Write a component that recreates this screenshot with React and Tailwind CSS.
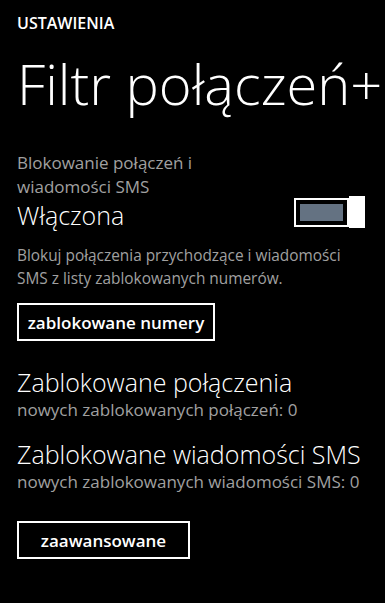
import React from "react";

function Button({ children, className }) {
  return (
    <button
      className={
        "border-2 border-white text-white font-semibold text-[17px] leading-none h-[38px] " +
        className
      }
    >
      {children}
    </button>
  );
}

export default function App() {
  return (
    <div
      className="w-[385px] h-[603px] bg-black text-white overflow-hidden pl-[17px]"
      style={{ fontFamily: '"Open Sans", sans-serif' }}
    >
      <div className="pt-[11px] text-[16px] font-semibold">USTAWIENIA</div>
      <h1 className="text-[56px] font-light leading-none mt-[20px] whitespace-nowrap">
        Filtr połączeń+
      </h1>

      <div className="mt-[40px] flex items-end justify-between pr-[20px]">
        <div>
          <p className="text-[17px] leading-[24px] text-[#a0a0a0]">
            Blokowanie połączeń i
            <br />
            wiadomości SMS
          </p>
          <p className="text-[25px] leading-[32px] font-light">Włączona</p>
        </div>
        <div className="flex items-center mb-[3px]">
          <div className="w-[55px] h-[29px] border-2 border-white p-[4px]">
            <div className="w-full h-full bg-[#647282]" />
          </div>
          <div className="w-[16px] h-[32px] bg-white" />
        </div>
      </div>

      <p className="mt-[13px] text-[15.4px] leading-[23px] text-[#a0a0a0] whitespace-nowrap">
        Blokuj połączenia przychodzące i wiadomości
        <br />
        SMS z listy zablokowanych numerów.
      </p>

      <Button className="mt-[13px] w-[198px]">zablokowane numery</Button>

      <div className="mt-[25px]">
        <p className="text-[25px] leading-[32px] font-light">Zablokowane połączenia</p>
        <p className="text-[17px] leading-[24px] text-[#a0a0a0]">
          nowych zablokowanych połączeń: 0
        </p>
      </div>

      <div className="mt-[16px]">
        <p className="text-[25px] leading-[32px] font-light">Zablokowane wiadomości SMS</p>
        <p className="text-[17px] leading-[24px] text-[#a0a0a0]">
          nowych zablokowanych wiadomości SMS: 0
        </p>
      </div>

      <Button className="mt-[27px] w-[173px]">zaawansowane</Button>
    </div>
  );
}
